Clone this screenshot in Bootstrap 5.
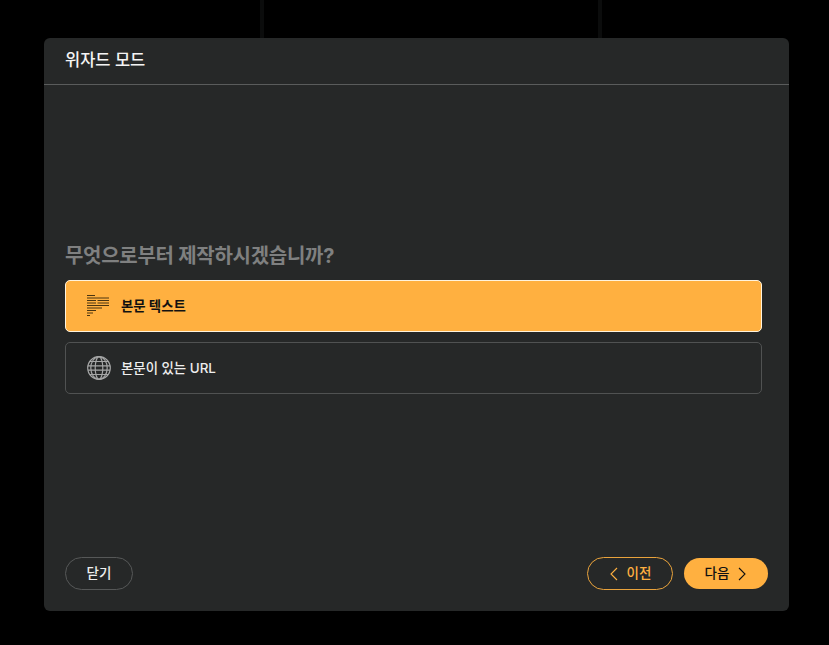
<!DOCTYPE html>
<html lang="ko">
<head>
    <meta charset="UTF-8">
    <meta name="viewport" content="width=device-width, initial-scale=1.0">
    <title>위자드 모드</title>
    <link href="https://cdn.jsdelivr.net/npm/bootstrap@5.3.2/dist/css/bootstrap.min.css" rel="stylesheet">
    <style>
        html, body { height: 100%; }
        body {
            background: #000;
            font-family: "Inter", "Noto Sans CJK KR", sans-serif;
            overflow: hidden;
        }
        .stage { padding: 38px 40px 34px 44px; height: 645px; position: relative; }
        .back-line { position: absolute; top: 0; width: 4px; height: 38px; background: #0b0c0c; }
        .back-line.one { left: 260px; }
        .back-line.two { left: 598px; }
        .wizard {
            height: 573px;
            background: #262828;
            border: 0;
            border-radius: 6px;
            color: #fff;
        }
        .wizard .modal-header {
            height: 47px;
            padding: 0 21px 1px;
            border-bottom: 1px solid #5a5c5c;
            border-radius: 6px 6px 0 0;
        }
        .wizard-title { font-size: 16.5px; font-weight: 500; color: #f4f4f4; margin: 0; line-height: 1; }
        .wizard .modal-body { padding: 0 27px 0 21px; }
        .ask { font-size: 20px; font-weight: 700; color: #7f8080; margin: 159px 0 12px; line-height: 24px; letter-spacing: -0.28px; }
        .pick {
            display: flex;
            align-items: center;
            gap: 10px;
            width: 100%;
            height: 52px;
            padding: 0 21px;
            margin-bottom: 10px;
            border-radius: 5px;
            border: 1px solid #505252;
            background: transparent;
            color: #eee;
            font-size: 13.4px;
            font-weight: 500;
            text-align: left;
        }
        .pick-label { padding-top: 1px; }
        .pick.picked { background: #ffb040; border-color: #fff3dd; color: #111; font-weight: 700; }
        .wizard .modal-footer { padding: 0 21px 21px; border: 0; }
        .pill {
            border-radius: 17px;
            font-size: 13.5px;
            font-weight: 500;
            height: 33px;
            padding: 0;
            display: inline-flex;
            align-items: center;
            justify-content: center;
            gap: 8px;
        }
        .pill-close { width: 68px; border: 1px solid #565858; color: #eee; background: transparent; }
        .pill-prev { width: 86px; border: 1px solid #e9a33c; color: #ffb040; background: transparent; }
        .pill-next { width: 84px; height: 31px; border: 0; color: #111; background: #ffb040; margin-left: 11px; }
    </style>
</head>
<body>
    <div class="stage">
        <div class="back-line one"></div>
        <div class="back-line two"></div>
        <div class="modal-content wizard d-flex flex-column">
            <div class="modal-header">
                <h5 class="wizard-title">위자드 모드</h5>
            </div>
            <div class="modal-body flex-grow-1">
                <p class="ask">무엇으로부터 제작하시겠습니까?</p>
                <button class="pick picked" type="button">
                    <svg width="24" height="24" viewBox="1 0 24 24" fill="none" stroke="#4a3410" stroke-width="1">
                        <path d="M1 1.5h8M1 4h22M1 6.5h9M11.5 6.5h11.5M1 9h9M11.5 9h11.5M1 11.5h22M1 14h15M1 16.5h9M1 19h6M1 21.5h3"/>
                    </svg>
                    <span class="pick-label">본문 텍스트</span>
                </button>
                <button class="pick" type="button">
                    <svg width="24" height="24" viewBox="0 0 24 24" fill="none" stroke="#a5a6a6" stroke-width="1.2">
                        <circle cx="12" cy="12" r="11.3"/>
                        <ellipse cx="12" cy="12" rx="3.8" ry="11.3"/>
                        <ellipse cx="12" cy="12" rx="8.2" ry="11.3"/>
                        <path d="M2.6 5.5h18.8M1 9.8h22M1 14.2h22M2.6 18.5h18.8"/>
                    </svg>
                    <span class="pick-label">본문이 있는 URL</span>
                </button>
            </div>
            <div class="modal-footer d-flex align-items-center">
                <button class="pill pill-close me-auto" type="button">닫기</button>
                <button class="pill pill-prev" type="button">
                    <svg width="10" height="14" viewBox="0 0 10 14" fill="none" stroke="currentColor" stroke-width="1.1"><path d="M8 1 2 7l6 6"/></svg>
                    이전
                </button>
                <button class="pill pill-next" type="button">
                    다음
                    <svg width="10" height="14" viewBox="0 0 10 14" fill="none" stroke="currentColor" stroke-width="1.1"><path d="M2 1l6 6-6 6"/></svg>
                </button>
            </div>
        </div>
    </div>
    <script src="https://cdn.jsdelivr.net/npm/bootstrap@5.3.2/dist/js/bootstrap.bundle.min.js"></script>
</body>
</html>
